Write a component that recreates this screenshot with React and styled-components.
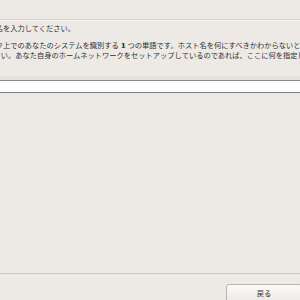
import styled, { createGlobalStyle } from "styled-components"

const Global = createGlobalStyle`
  html, body { margin: 0; padding: 0; }
  body {
    background: #edeae6;
    font-family: "Noto Sans CJK JP", "DejaVu Sans", sans-serif;
  }
`

const Page = styled.div`
  width: 300px;
  height: 300px;
  overflow: hidden;
  display: flex;
  flex-direction: column;
  background: #edeae6;
  color: #2e3032;
`

const Header = styled.div`
  height: 19px;
  flex: none;
  border-bottom: 1px solid #d6d2cc;
  box-shadow: 0 1px 0 #f6f4f1;
`

const Message = styled.div`
  padding-top: 3px;
  font-size: 7.25px;
  line-height: 10px;
  flex: none;
`

const Paragraph = styled.p`
  margin: 0 0 ${(p) => p.$gap || 0}px;
`

const Line = styled.div`
  white-space: nowrap;
  margin-left: ${(p) => p.$shift}px;
`

const Num = styled.b`
  font-family: "DejaVu Serif", serif;
  font-weight: bold;
  font-size: 8px;
`

const Entry = styled.div`
  margin-top: 16px;
  flex: none;
  border-top: 4px solid #e3e3de;
`

const Field = styled.input`
  display: block;
  width: 100%;
  box-sizing: border-box;
  height: 13px;
  margin: 0;
  padding: 0 4px;
  border: none;
  border-top: 1px solid #8a8d89;
  border-bottom: 1px solid #7b7e7a;
  background: #fff;
  outline: none;
`

const Spacer = styled.div`
  flex: 1;
`

const Footer = styled.div`
  flex: none;
  height: 27px;
  border-top: 1px solid #d3cfca;
  box-shadow: inset 0 1px 0 #e6e2dd, inset 0 3px 0 #f1eee9;
  display: flex;
  justify-content: flex-end;
  padding-top: 10px;
  box-sizing: border-box;
`

const Button = styled.button`
  width: 76px;
  height: 19px;
  margin-right: -2px;
  flex: none;
  border: 1px solid #b9b5b0;
  border-radius: 3px;
  background: linear-gradient(#fbfaf9, #ece9e5);
  color: #2e3032;
  font-family: "Noto Sans CJK JP", sans-serif;
  font-size: 7.25px;
  padding: 0 0 2px;
`

export default function App() {
  return (
    <Page>
      <Global />
      <Header />
      <Message>
        <Paragraph $gap={6.5}>
          <Line $shift={-26}>ホスト名を入力してください。</Line>
        </Paragraph>
        <Paragraph>
          <Line $shift={-84}>
            ホスト名は、ネットワーク上でのあなたのシステムを識別する <Num>1</Num> つの単語です。ホスト名を何にすべきかわからないときには、
          </Line>
          <Line $shift={-35}>
            してください。あなた自身のホームネットワークをセットアップしているのであれば、ここに何を指定してもかまいません。
          </Line>
        </Paragraph>
      </Message>
      <Entry>
        <Field defaultValue="" />
      </Entry>
      <Spacer />
      <Footer>
        <Button>戻る</Button>
      </Footer>
    </Page>
  )
}
